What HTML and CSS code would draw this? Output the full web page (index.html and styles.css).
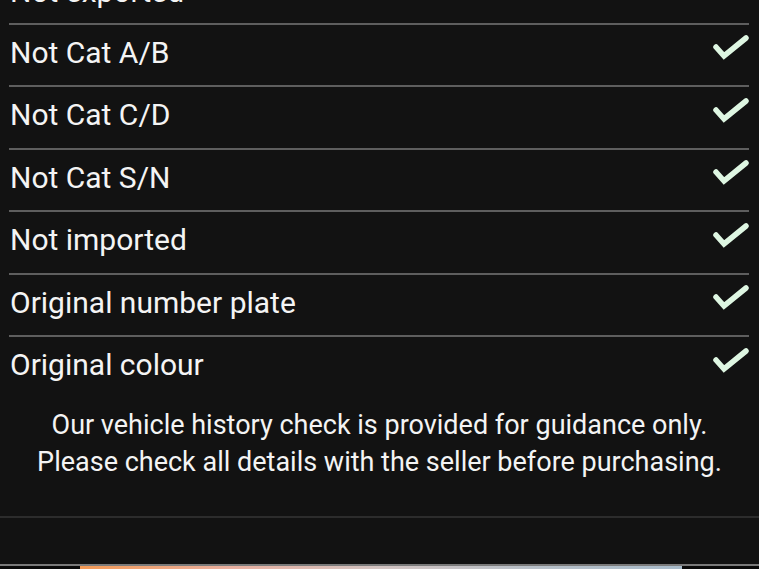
FILE: index.html
```html
<!DOCTYPE html>
<html lang="en">
<head>
<meta charset="utf-8">
<title>Vehicle history check</title>
<link rel="stylesheet" href="styles.css">
</head>
<body>
<div class="page">
  <ul class="checks">
    <li class="row"><span class="label">Not exported</span><svg class="tick" viewBox="0 0 36 26"><polyline points="3,12 11,21 33,3"/></svg></li>
    <li class="row"><span class="label">Not Cat A/B</span><svg class="tick" viewBox="0 0 36 26"><polyline points="3,12 11,21 33,3"/></svg></li>
    <li class="row"><span class="label">Not Cat C/D</span><svg class="tick" viewBox="0 0 36 26"><polyline points="3,12 11,21 33,3"/></svg></li>
    <li class="row"><span class="label">Not Cat S/N</span><svg class="tick" viewBox="0 0 36 26"><polyline points="3,12 11,21 33,3"/></svg></li>
    <li class="row"><span class="label">Not imported</span><svg class="tick" viewBox="0 0 36 26"><polyline points="3,12 11,21 33,3"/></svg></li>
    <li class="row"><span class="label">Original number plate</span><svg class="tick" viewBox="0 0 36 26"><polyline points="3,12 11,21 33,3"/></svg></li>
    <li class="row"><span class="label">Original colour</span><svg class="tick" viewBox="0 0 36 26"><polyline points="3,12 11,21 33,3"/></svg></li>
  </ul>
  <p class="note">Our vehicle history check is provided for guidance only.<br>Please check all details with the seller before purchasing.</p>
  <div class="spacer"></div>
  <div class="bar"><div class="bar-fill"></div></div>
</div>
</body>
</html>
```
FILE: styles.css
```css
html, body {
  margin: 0;
  padding: 0;
  background: #121212;
}
body {
  height: 569px;
  overflow: hidden;
  font-family: Roboto, "Liberation Sans", sans-serif;
  color: #f4f4f4;
}
.page {
  display: flex;
  flex-direction: column;
  height: 569px;
}
.checks {
  list-style: none;
  margin: -36px 0 0;
  padding: 0 10px 0 9px;
}
.row {
  display: flex;
  align-items: center;
  justify-content: space-between;
  height: 60.5px;
  border-top: 2px solid #5e5e5e;
  box-sizing: content-box;
}
.row:first-child {
  height: 56.5px;
  border-top-color: transparent;
}
.label {
  font-size: 30px;
  padding-left: 1px;
  padding-bottom: 5px;
}
.tick {
  width: 36px;
  height: 26px;
  align-self: flex-start;
  margin-top: 10.5px;
  fill: none;
  stroke: #def6e2;
  stroke-width: 5.5;
  stroke-linecap: round;
  stroke-linejoin: miter;
}
.row:first-child .tick {
  margin-top: 4px;
}
.note {
  margin: 0;
  padding: 9.5px 10px 34.5px;
  font-size: 27px;
  line-height: 37px;
  text-align: center;
  border-bottom: 2px solid #2c2c2c;
}
.spacer {
  flex: 1;
}
.bar {
  height: 3px;
  border-top: 2px solid #7a7a7a;
  background: #0a0a0a;
  padding: 0 77px 0 80px;
}
.bar-fill {
  height: 3px;
  background: linear-gradient(90deg, #f49a55 0%, #eab0a0 25%, #d2c4c2 50%, #b8c0c8 75%, #a9bccb 100%);
}
```
